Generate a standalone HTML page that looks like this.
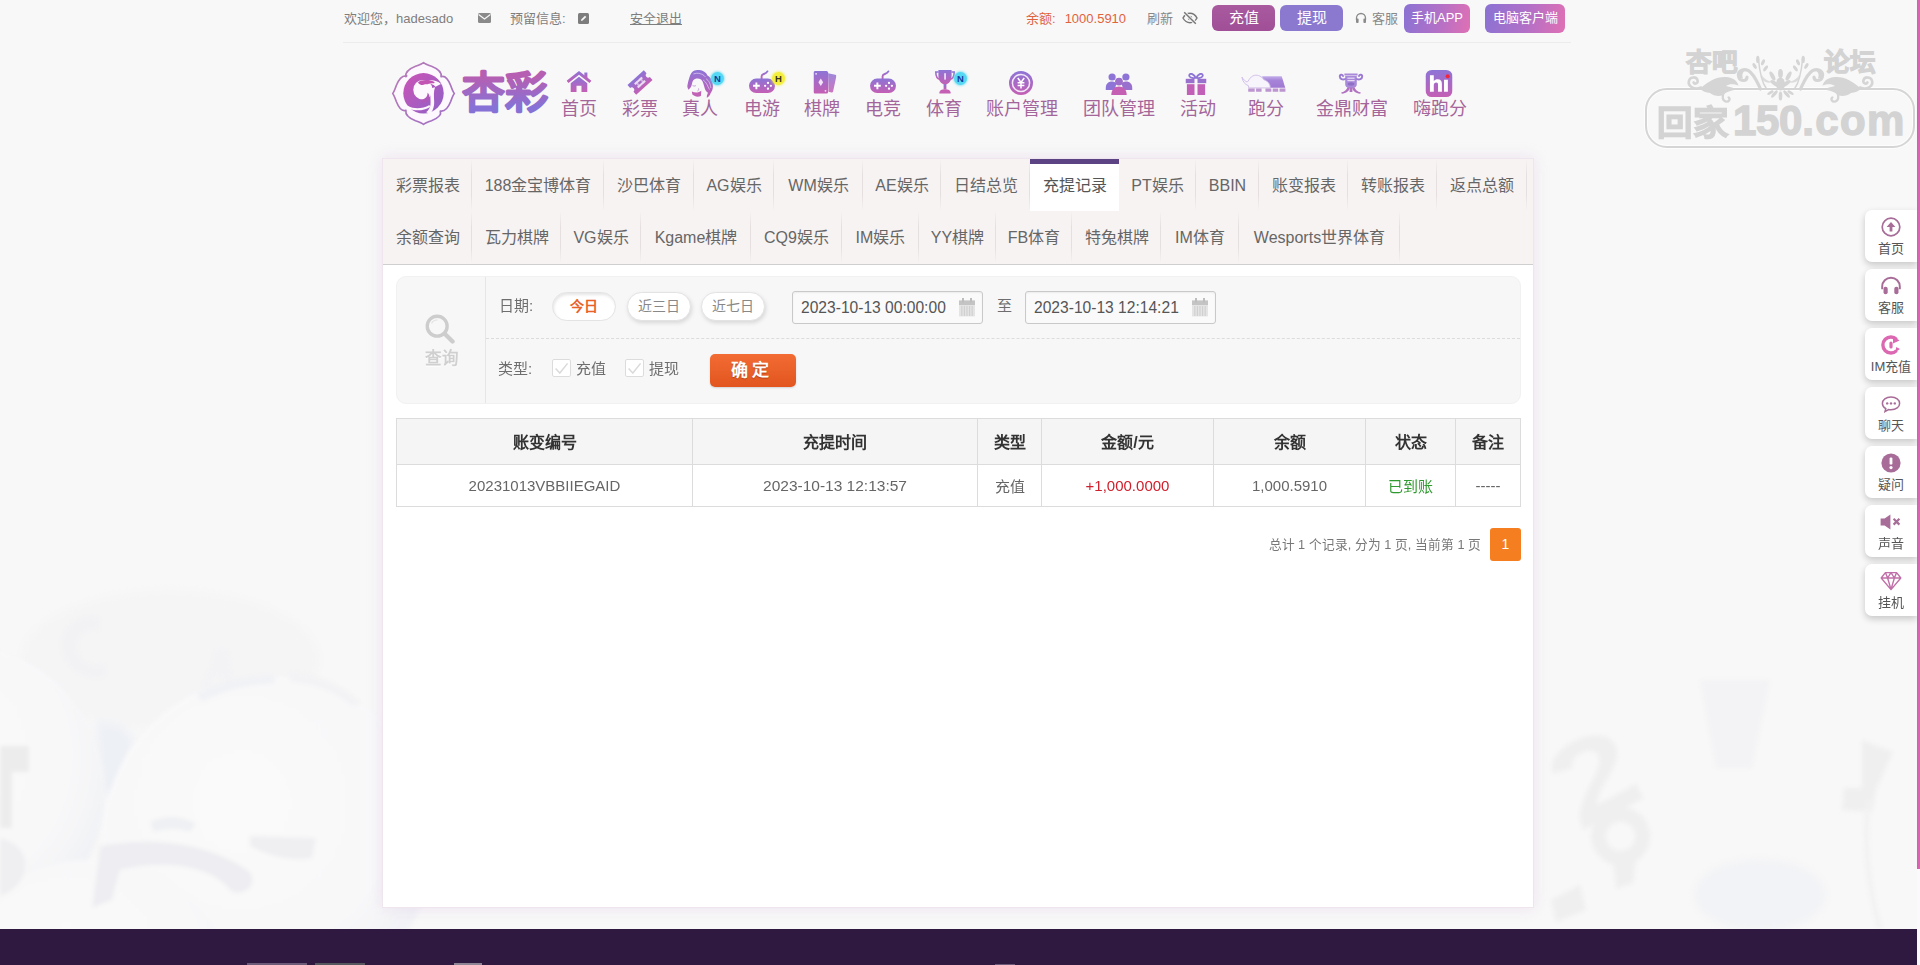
<!DOCTYPE html>
<html lang="zh-CN">
<head>
<meta charset="utf-8">
<title>充提记录</title>
<style>
*{box-sizing:border-box;margin:0;padding:0}
html,body{width:1920px;height:965px;overflow:hidden}
body{position:relative;background:#f8f8f8;font-family:"Liberation Sans",sans-serif;font-size:13px;color:#666}
.abs{position:absolute}
a{color:inherit;text-decoration:none}
/* ---------- top bar ---------- */
#top{position:absolute;left:343px;top:0;width:1228px;height:43px;border-bottom:1px solid #ececec}
#top .t{position:absolute;top:10px;height:18px;line-height:18px;font-size:13px;color:#7e7e7e;white-space:nowrap}
#top .bal{color:#e0633c}
.btn{position:absolute;color:#fff;text-align:center;border-radius:6px;white-space:nowrap}
/* ---------- nav ---------- */
.nv{position:absolute;top:66px;height:56px;transform:translateX(-50%);text-align:center;white-space:nowrap}
.nv svg{position:absolute;left:50%;transform:translateX(-50%)}
.nv span{position:absolute;left:50%;transform:translateX(-50%);top:31px;font-size:18px;line-height:24px;color:#a4669a}
.bdg{position:absolute;width:13px;height:13px;border-radius:50%;font-size:9.5px;line-height:13px;font-weight:bold;text-align:center}
/* ---------- panel ---------- */
#panel{position:absolute;left:382px;top:158px;width:1152px;height:750px;background:#fff;border:1px solid #eee5ee;box-shadow:0 0 14px rgba(214,180,222,.32)}
#tabs{position:absolute;left:0;top:0;width:1150px;height:106px;background:#f7f3f3;border-bottom:1px solid #cfcfcf}
.tb{position:absolute;height:52px;line-height:54px;font-size:16px;color:#666;text-align:center;white-space:nowrap}
.tb:after{content:"";position:absolute;right:0;top:0;width:1px;height:52px;background:linear-gradient(#f7f3f3,#e6dfdf 30%,#e6dfdf 70%,#f7f3f3)}
.tb.on{background:#fff;border-top:5px solid #5c4484;line-height:43px;color:#555}
.tb.on:after{display:none}
/* ---------- search ---------- */
#search{position:absolute;left:13px;top:117px;width:1125px;height:128px;background:#f7f7f7;border:1px solid #f1f1f1;border-radius:10px}
#search .lf{position:absolute;left:0;top:0;width:89px;height:126px;border-right:1px solid #e6e6e6}
#search .dash{position:absolute;left:89px;top:61px;width:1034px;height:0;border-top:1px dashed #dcdcdc}
.lb{position:absolute;font-size:15px;color:#6e6e6e;line-height:20px;white-space:nowrap}
.pill{position:absolute;top:15px;width:64px;height:29px;border-radius:15px;background:#fff;border:1px solid #e3e3e3;font-size:14px;line-height:26px;text-align:center;color:#888;box-shadow:1px 2px 4px rgba(0,0,0,.13)}
.pill.on{color:#e8622a;font-weight:bold;box-shadow:inset 1px 2px 3px rgba(0,0,0,.10)}
.inp{position:absolute;top:14px;width:191px;height:33px;border:1px solid #c9c9c9;border-radius:3px;background:#fafafa;font-size:15.6px;line-height:31px;color:#555;padding-left:8px;white-space:nowrap;box-shadow:inset 0 1px 2px rgba(0,0,0,.06)}
.cb{position:absolute;top:82px;width:19px;height:18px;background:#fff;border:1px solid #dcdcdc;border-radius:2px}
/* ---------- table ---------- */
#tbl{position:absolute;left:13px;top:259px;width:1124px;border-collapse:collapse;table-layout:fixed}
#tbl th,#tbl td{border:1px solid #dcdcdc;text-align:center;white-space:nowrap;padding:0}
#tbl th{height:46px;background:#f5f5f5;font-size:16px;font-weight:bold;color:#333;padding-bottom:2px}
#tbl td{height:42px;font-size:15px;color:#666;padding-bottom:1px}
/* ---------- side ---------- */
.sd{position:absolute;left:1865px;width:52px;height:52px;background:#fff;border-radius:7px 0 0 7px;box-shadow:0 3px 7px rgba(0,0,0,.2)}
.sd span{position:absolute;left:0;width:52px;top:30px;text-align:center;font-size:13px;line-height:18px;color:#555;white-space:nowrap}
.sd svg{position:absolute;left:16px;top:7px}
</style>
</head>
<body>
<svg class="abs" style="left:0;top:0" width="1917" height="929" viewBox="0 0 1917 929">
<defs>
<radialGradient id="ba" cx=".42" cy=".38" r=".62"><stop offset="0" stop-color="#fafafa"/><stop offset=".75" stop-color="#f8f8f9"/><stop offset="1" stop-color="#f1f2f5"/></radialGradient>
<filter id="bl"><feGaussianBlur stdDeviation="2.2"/></filter>
<filter id="bl2"><feGaussianBlur stdDeviation="5"/></filter>
</defs>
<g filter="url(#bl2)">
<path d="M95 700 L135 740 L118 800 L100 790 Z" fill="#edf0f5"/>
<ellipse cx="1760" cy="895" rx="66" ry="36" fill="#f2f3f6"/>
<ellipse cx="170" cy="660" rx="150" ry="70" fill="#f5f5f6"/>
</g>
<g filter="url(#bl)">
<circle cx="-42" cy="792" r="147" fill="url(#ba)"/>
<circle cx="268" cy="842" r="166" fill="url(#ba)"/>
<circle cx="90" cy="1010" r="150" fill="url(#ba)"/>
<path d="M0 746 H29 V772 H12 V828 H0 Z" fill="#ececed"/>
<path d="M0 838 C18 842 30 856 24 874 C20 886 8 894 0 896 Z" fill="#efeff1"/>
<path d="M100 846 C150 836 210 842 250 872 C258 884 246 896 232 892 C214 868 170 858 120 870 L112 900 L92 908 Z" fill="#eeeef2"/>
<path d="M250 836 L316 838 L312 858 C292 862 268 856 250 846 Z" fill="#efeff2"/>
<path d="M150 822 C165 814 185 816 196 824 L190 832 C178 828 166 828 154 832 Z" fill="#eff0f3"/>
<path d="M62 650 C58 630 76 612 100 618 L98 630 C84 628 74 638 78 652 C82 664 94 668 104 664 L106 676 C86 682 66 670 62 650 Z" fill="#f2f2f4"/>
<path d="M202 688 L216 650 L228 650 L234 688 L224 688 L222 676 L212 676 L210 688 Z" fill="#f3f3f5"/>
<path d="M196 694 C220 680 250 674 276 676 L274 684 C250 684 224 690 202 702 Z" fill="#f1f2f5"/>
<path d="M290 672 C320 674 345 686 362 704 L352 706 C336 692 314 684 290 682 Z" fill="#f3f3f5"/>
<g transform="rotate(-28 1606 800)" fill="#efeff0"><path d="M1572 752 C1572 726 1640 726 1640 756 C1640 776 1604 784 1596 800 H1640 V816 H1572 C1572 784 1620 776 1620 756 C1620 744 1592 744 1592 756 Z"/></g>
<g transform="rotate(-20 1622 840)"><circle cx="1622" cy="836" r="22" fill="none" stroke="#efeff0" stroke-width="15"/><path d="M1606 858 L1600 884 L1618 884 L1630 860 Z" fill="#efeff0"/></g>
<path d="M1700 680 H1770 L1752 768 H1716 Z" fill="#f3f3f5"/>
<path d="M1862 740 L1893 752 L1876 790 L1872 812 L1842 810 L1844 788 L1862 788 Z" fill="#efefef"/>
<path d="M1551 900 L1580 885 L1586 910 L1556 922 Z" fill="#efeff0"/>
<path d="M1868 800 C1864 840 1866 880 1880 929" fill="none" stroke="#f2f2f3" stroke-width="5"/>
</g>
</svg>

<div id="top">
<div class="t" style="left:1px">欢迎您，hadesado</div>
<svg class="abs" style="left:135px;top:13px" width="13" height="10" viewBox="0 0 13 10"><rect width="13" height="10" rx="1.5" fill="#8a8a8a"/><path d="M0.6 1.6 L6.5 6 L12.4 1.6" fill="none" stroke="#f8f8f8" stroke-width="1.2"/></svg>
<div class="t" style="left:167px">预留信息:</div>
<svg class="abs" style="left:235px;top:13px" width="11" height="11" viewBox="0 0 11 11"><rect width="11" height="11" rx="1.5" fill="#7d7d7d"/><path d="M3 8 L3.4 6.3 L7 2.7 L8.3 4 L4.7 7.6 Z" fill="#f8f8f8"/></svg>
<div class="t" style="left:287px;text-decoration:underline"><a>安全退出</a></div>
<div class="t bal" style="left:683px">余额:<span style="margin-left:9px">1000.5910</span></div>
<div class="t" style="left:804px;color:#888">刷新</div>
<svg class="abs" style="left:839px;top:11px" width="16" height="14" viewBox="0 0 16 14"><path d="M1 7 C3 3.4 5.5 2.3 8 2.3 C10.5 2.3 13 3.4 15 7 C13 10.6 10.5 11.7 8 11.7 C5.5 11.7 3 10.6 1 7 Z" fill="none" stroke="#777" stroke-width="1.5"/><circle cx="8" cy="7" r="2.2" fill="#777"/><path d="M2 1 L14 13" stroke="#f8f8f8" stroke-width="3.2"/><path d="M2.2 1.2 L13.8 12.8" stroke="#777" stroke-width="1.5"/></svg>
<div class="btn" style="left:869px;top:5px;width:63px;height:26px;line-height:26px;font-size:15px;background:linear-gradient(#a95a9f,#a04f96)">充值</div>
<div class="btn" style="left:937px;top:5px;width:63px;height:26px;line-height:26px;font-size:15px;background:#8b79cf">提现</div>
<svg class="abs" style="left:1012px;top:12px" width="12" height="12" viewBox="0 0 12 12"><path d="M1.5 8 V6 A4.5 4.5 0 0 1 10.5 6 V8" fill="none" stroke="#8a8a8a" stroke-width="1.3"/><rect x="1" y="6.6" width="2.6" height="4.4" rx="1" fill="#8a8a8a"/><rect x="8.4" y="6.6" width="2.6" height="4.4" rx="1" fill="#8a8a8a"/></svg>
<div class="t" style="left:1029px;color:#888">客服</div>
<div class="btn" style="left:1061px;top:4px;width:66px;height:29px;line-height:28px;font-size:13px;background:linear-gradient(100deg,#8e72d2 5%,#b070c8 50%,#e070b4 100%)">手机APP</div>
<div class="btn" style="left:1142px;top:4px;width:80px;height:29px;line-height:28px;font-size:13px;background:linear-gradient(100deg,#8e72d2 5%,#b070c8 50%,#e070b4 100%)">电脑客户端</div>
</div>
<svg width="0" height="0" style="position:absolute"><defs>
<linearGradient id="g1" x1="0" y1="0" x2="0" y2="1"><stop offset="0" stop-color="#8d74d6"/><stop offset="1" stop-color="#c45fb4"/></linearGradient>
<linearGradient id="g2" x1="0" y1="0" x2="1" y2="1"><stop offset="0" stop-color="#cc52b6"/><stop offset="1" stop-color="#8e62c8"/></linearGradient>
<linearGradient id="g3" x1="0" y1="0" x2="1" y2="1"><stop offset="0" stop-color="#b97cb6"/><stop offset="1" stop-color="#a070c6"/></linearGradient>
</defs></svg>
<svg class="abs" style="left:391px;top:61px" width="65" height="65" viewBox="0 0 65 65">
<path d="M14.90 15.70 C13.90 10.30 19.50 7.30 24.50 5.30 C28.50 3.90 31.10 2.90 32.50 1.70 C33.90 2.90 36.50 3.90 40.50 5.30 C45.50 7.30 51.10 10.30 50.10 15.70 C54.70 13.90 57.70 19.50 59.70 24.50 C61.10 28.50 62.10 31.10 63.30 32.50 C62.10 33.90 61.10 36.50 59.70 40.50 C57.70 45.50 54.70 51.10 49.30 50.10 C51.10 54.70 45.50 57.70 40.50 59.70 C36.50 61.10 33.90 62.10 32.50 63.30 C31.10 62.10 28.50 61.10 24.50 59.70 C19.50 57.70 13.90 54.70 14.90 49.30 C10.30 51.10 7.30 45.50 5.30 40.50 C3.90 36.50 2.90 33.90 1.70 32.50 C2.90 31.10 3.90 28.50 5.30 24.50 C7.30 19.50 10.30 13.90 15.70 14.90 Z" fill="#fdf8fd" stroke="url(#g3)" stroke-width="1.7" stroke-linejoin="round"/>
<g transform="translate(32.5 32.3)">
<circle r="20.2" fill="url(#g2)"/>
<ellipse cx="-0.6" cy="-3.6" rx="9.6" ry="9.8" fill="#fdf8fd"/>
<path d="M5 -12.6 C9 -13.6 14 -12.4 17.4 -9.4 L12 -6.6 C10 -8.6 7.4 -9.6 5 -9.4 Z" fill="#fdf8fd"/>
<path d="M7.6 -5 C6 0 7.4 6 7 11 C6.8 14.4 5 17 2.6 19 L6.6 20.6 C10 17 11 12 10.6 7 C10.4 2 10 -2 11.6 -6 Z" fill="#fdf8fd"/>
<path d="M-15.4 12.6 C-9 16 -1 15.4 6 11.6 L6.6 13.6 C-0.4 18 -9.4 18 -16.4 14.4 Z" fill="#fdf8fd"/>
<path d="M-5.6 -10.8 C-2 -13.6 5 -14 10.6 -11.6 C11.6 -11 11 -10 9.8 -10 C6.6 -10.4 4.4 -8.6 1.4 -9 C-0.6 -7.6 -3.4 -8 -5.6 -10.8 Z" fill="#c254b4"/>
<path d="M-2.4 6.6 C1.6 6 4.4 3 4 -0.6 C6.6 1 6.6 5.4 4 8 C1.6 10.4 -1.6 9.6 -2.4 6.6 Z" fill="#b058ba"/>
</g>
</svg>
<svg class="abs" style="left:458px;top:62px" width="100" height="60" viewBox="0 0 100 60"><defs><linearGradient id="g4" gradientUnits="userSpaceOnUse" x1="0" y1="8" x2="0" y2="52"><stop offset=".15" stop-color="#b65fb2"/><stop offset=".85" stop-color="#8672d6"/></linearGradient></defs><text x="4" y="46" font-size="43" font-weight="bold" fill="url(#g4)" stroke="url(#g4)" stroke-width="1.8" stroke-linejoin="round" style="font-family:'Liberation Sans',sans-serif">杏彩</text></svg>
<div class="nv" style="left:579px;width:60px"><svg style="top:5px" width="25" height="21" viewBox="0 0 26 22"><path d="M13 0 L26 10.3 L24 12.6 L13 4 L2 12.6 L0 10.3 Z" fill="url(#g1)"/><path d="M4.3 12.8 L13 6 L21.7 12.8 V22 H15.6 V15.4 H10.4 V22 H4.3 Z" fill="url(#g1)"/><rect x="18.6" y="1.6" width="3.2" height="6" fill="url(#g1)"/></svg><span>首页</span></div>
<div class="nv" style="left:640px;width:60px"><svg style="top:4px" width="26" height="25" viewBox="0 0 26 25"><g transform="rotate(-42 13 12.5)"><path d="M2 6 H24 V10 A2.5 2.5 0 0 0 24 15 V19 H2 V15 A2.5 2.5 0 0 0 2 10 Z" fill="url(#g1)"/><rect x="8" y="9.2" width="10" height="2.1" fill="#e9dcf3"/><rect x="8" y="13.6" width="10" height="2.1" fill="#e9dcf3"/><rect x="9.2" y="9.2" width="2" height="6.5" fill="#e9dcf3" opacity=".6"/><rect x="14.8" y="9.2" width="2" height="6.5" fill="#e9dcf3" opacity=".6"/></g></svg><span>彩票</span></div>
<div class="nv" style="left:700px;width:60px"><svg style="top:4px" width="27" height="28" viewBox="0 0 27 28"><path d="M10.7 0 C15 -0.4 19.5 1.6 21 5.5 C24.6 7.4 26.6 12 26.4 16.9 C26.2 20 24.8 22 24 23.4 C23.6 25 22 27 20.4 27.8 C20 26 21 24.4 21.4 22.8 C19.6 21.6 18.4 19.6 18 17.6 C17 14.6 16.8 11.6 14.6 9.6 C12 8 8.6 8.4 6.6 10.4 C5.4 12.4 5.6 14.6 4.6 16.6 C4 18 3 19 2.1 19.8 C1 18 0.6 16.6 0.95 15.2 C1.6 12 2.4 9 3.2 6.6 C4.4 2.6 7 0.2 10.7 0 Z" fill="url(#g1)"/><path d="M5.4 21.4 C8 23 12 23 14.8 20.8 L14.4 26 C11 27.4 8 26.4 5.8 24.6 Z" fill="#c262b4"/><path d="M7 4 C11 2.4 16 3.4 19 7 M16.6 10 C20 12 21 16 23 19.6 M19.4 8.6 C22.6 10.6 24 14 24.4 18" fill="none" stroke="#efe4f7" stroke-width=".8" opacity=".75"/><path d="M6 15.4 C7 16.2 8.4 16.2 9.4 15.6 M12 18.4 C12.6 19.6 12 20.6 11 21" fill="none" stroke="#b58cc8" stroke-width=".8"/></svg><i class="bdg" style="left:41px;top:5.5px;background:#55d8f3;box-shadow:0 0 2px 1px rgba(85,216,243,.55);color:#173a9c;font-style:normal">N</i><span>真人</span></div>
<div class="nv" style="left:762px;width:60px"><svg style="top:4px" width="26" height="23" viewBox="0 0 26 23"><path d="M12.6 9 V6.2 C12.6 3.4 16.6 4.8 18.4 1.4" fill="none" stroke="url(#g1)" stroke-width="1.9" stroke-linecap="round"/><rect x="0" y="8.6" width="26" height="14.4" rx="7.2" fill="url(#g1)"/><path d="M7.4 12.4 V19.2 M4 15.8 H10.8" stroke="#fff" stroke-width="1.9"/><circle cx="19" cy="12.9" r="1.15" fill="#fff"/><circle cx="19" cy="18.7" r="1.15" fill="#fff"/><circle cx="16.1" cy="15.8" r="1.15" fill="#fff"/><circle cx="21.9" cy="15.8" r="1.15" fill="#fff"/></svg><i class="bdg" style="left:40px;top:5.5px;background:#f4ee3c;box-shadow:0 0 2px 1px rgba(244,238,60,.55);color:#3a3520;font-style:normal">H</i><span>电游</span></div>
<div class="nv" style="left:822px;width:60px"><svg style="top:5px;margin-left:3px" width="23" height="23" viewBox="0 0 23 23"><path d="M14.6 2.2 L21.8 3.8 C22.6 4 23 4.6 22.8 5.4 L19.6 20.4 C19.4 21.2 18.8 21.6 18 21.4 L15 20.8 Z" fill="url(#g1)" opacity=".85"/><rect x="0" y="0" width="14.6" height="22.6" rx="1.6" fill="url(#g1)"/><path d="M7.3 7.6 L9.7 11.3 L7.3 15 L4.9 11.3 Z" fill="#f1e4f6"/><circle cx="2.6" cy="2.8" r=".9" fill="#f1e4f6"/><circle cx="12" cy="19.8" r=".9" fill="#f1e4f6"/></svg><span>棋牌</span></div>
<div class="nv" style="left:883px;width:60px"><svg style="top:4px" width="26" height="23" viewBox="0 0 26 23"><path d="M12.6 9 V6.2 C12.6 3.4 16.6 4.8 18.4 1.4" fill="none" stroke="url(#g1)" stroke-width="1.9" stroke-linecap="round"/><rect x="0" y="8.6" width="26" height="14.4" rx="7.2" fill="url(#g1)"/><path d="M7.4 12.4 V19.2 M4 15.8 H10.8" stroke="#fff" stroke-width="1.9"/><circle cx="19" cy="12.9" r="1.15" fill="#fff"/><circle cx="19" cy="18.7" r="1.15" fill="#fff"/><circle cx="16.1" cy="15.8" r="1.15" fill="#fff"/><circle cx="21.9" cy="15.8" r="1.15" fill="#fff"/></svg><span>电竞</span></div>
<div class="nv" style="left:944px;width:60px"><svg style="top:4px;margin-left:1px" width="20" height="24" viewBox="0 0 20 24"><path d="M3.4 0 H16.6 V5.6 C16.6 11 13.6 14.4 10 14.4 C6.4 14.4 3.4 11 3.4 5.6 Z" fill="url(#g1)"/><path d="M3.6 2 H0.8 C0.8 6.4 2.2 8.8 5 9.6 M16.4 2 H19.2 C19.2 6.4 17.8 8.8 15 9.6" fill="none" stroke="url(#g1)" stroke-width="1.6"/><rect x="8.6" y="14" width="2.8" height="5.4" fill="url(#g1)"/><path d="M4.4 22.6 C4.4 20.4 6.6 19.2 10 19.2 C13.4 19.2 15.6 20.4 15.6 22.6 V23.6 H4.4 Z" fill="#c45fb4"/><rect x="9.2" y="3.2" width="1.7" height="6.4" fill="#efe2f6"/></svg><i class="bdg" style="left:40px;top:5.5px;background:#55d8f3;box-shadow:0 0 2px 1px rgba(85,216,243,.55);color:#173a9c;font-style:normal">N</i><span>体育</span></div>
<div class="nv" style="left:1022px;width:96px"><svg style="top:5px;margin-left:-1px" width="24" height="24" viewBox="0 0 24 24"><circle cx="12" cy="12" r="12" fill="url(#g1)"/><circle cx="12" cy="12" r="8.6" fill="none" stroke="#f3e9f8" stroke-width="1.5"/><path d="M8.8 7 L12 11.4 L15.2 7 M8.6 11.8 H15.4 M8.6 14.4 H15.4 M12 11.4 V17.6" fill="none" stroke="#fff" stroke-width="1.5"/></svg><span>账户管理</span></div>
<div class="nv" style="left:1119px;width:96px"><svg style="top:7px" width="27" height="22" viewBox="0 0 27 22"><circle cx="6.6" cy="4" r="3.6" fill="#8d74d6"/><circle cx="20.4" cy="4" r="3.6" fill="#8d74d6"/><path d="M0 16 C0 11 2.6 8.4 6.6 8.4 C9 8.4 10.4 9.4 11 10.6 L9 17 H0 Z" fill="#8d74d6"/><path d="M27 16 C27 11 24.4 8.4 20.4 8.4 C18 8.4 16.6 9.4 16 10.6 L18 17 H27 Z" fill="#9a70cf"/><circle cx="13.5" cy="8.6" r="3.9" fill="#9e6ecb"/><path d="M5.8 22 C5.8 16.6 8.8 13.4 13.5 13.4 C18.2 13.4 21.2 16.6 21.2 22 Z" fill="#c45fb4"/></svg><span>团队管理</span></div>
<div class="nv" style="left:1198px;width:60px"><svg style="top:7px;margin-left:-2px" width="21" height="22" viewBox="0 0 21 22"><path d="M10.5 5.4 C8.6 1 4.6 -0.6 3.8 2 C3.2 4.2 6.6 5.4 10.5 5.4 C14.4 5.4 17.8 4.2 17.2 2 C16.4 -0.6 12.4 1 10.5 5.4 Z" fill="none" stroke="#8d74d6" stroke-width="1.8"/><rect x="0" y="5.8" width="21" height="4.4" fill="#9a70cf"/><rect x="1.4" y="11.2" width="18.2" height="10.8" fill="#c160b6"/><rect x="9" y="5.8" width="3" height="16.2" fill="#f8f8f8"/></svg><span>活动</span></div>
<div class="nv" style="left:1266px;width:60px"><svg style="top:8px;margin-left:-2px" width="46" height="19" viewBox="0 0 47 19"><defs><linearGradient id="g5" x1="0" y1="0" x2="0" y2="1"><stop offset="0" stop-color="#c2adea"/><stop offset=".35" stop-color="#a684d8"/><stop offset="1" stop-color="#a078d2"/></linearGradient></defs><path d="M21.7 2.2 H41.6 L45.2 13.9 H21.7 Z" fill="url(#g5)"/><path d="M1 3 C1.6 7.6 4.2 10.6 7.4 11.6 L8 14 H29.8 C30.2 9.6 27 7 23.4 5.6 C21.4 2.4 17.6 0.4 13.8 1.2 C11.4 1.6 9.6 3.4 8.2 5.6 C7.6 6.6 7 7.6 6.4 8 C4.4 7.4 2.4 5.4 1 3 Z" fill="#f8f4fc" stroke="#cdb9e9" stroke-width=".9"/><path d="M7.4 14.6 H14 V18 H7.4 Z M15.4 14.6 H21 V18 H15.4 Z M25 14.6 H31 V18 H25 Z M32.4 14.6 H38 V18 H32.4 Z M39.4 14.6 H45.4 V18 H39.4 Z" fill="#b689cc" opacity=".9"/></svg><span>跑分</span></div>
<div class="nv" style="left:1352px;width:96px"><svg style="top:7px;margin-left:-1px" width="26" height="21" viewBox="0 0 26 21"><path d="M6.4 0.6 H19.6 V2.4 H6.4 Z M7.2 3 H18.8 V11.4 C18.8 13.8 16.4 15 13 15 C9.6 15 7.2 13.8 7.2 11.4 Z" fill="#a98ada"/><path d="M7.2 6 C4.6 7.4 2 6 1.8 3.6 C1.6 1.4 4.8 1 5 3 M18.8 6 C21.4 7.4 24 6 24.2 3.6 C24.4 1.4 21.2 1 21 3" fill="none" stroke="#9a7ad2" stroke-width="1.9" stroke-linecap="round"/><rect x="9.4" y="4.6" width="7.2" height="1.2" fill="#e6daf5"/><rect x="9.4" y="7" width="7.2" height="1.2" fill="#e6daf5"/><ellipse cx="13" cy="11" rx="3.4" ry="1.7" fill="#8f6fc6"/><path d="M9.4 14.2 C8.8 16.8 6.6 18.6 3.2 19.4 L3.8 20.8 C8.4 20.2 11.2 18.2 11.8 14.8 Z M16.6 14.2 C17.2 16.8 19.4 18.6 22.8 19.4 L22.2 20.8 C17.6 20.2 14.8 18.2 14.2 14.8 Z" fill="#b272c2"/><rect x="11.6" y="14.6" width="2.8" height="4.4" fill="#b272c2"/></svg><span>金鼎财富</span></div>
<div class="nv" style="left:1440px;width:78px"><svg style="top:4px;margin-left:-1px" width="27" height="27" viewBox="0 0 28 28"><rect width="28" height="28" rx="6.5" fill="url(#g1)"/><path d="M4.6 5.4 H8.6 V11.4 C9.6 10.2 11 9.6 12.6 9.6 C15.6 9.6 17 11.4 17 14.2 V22.6 H13 V15 C13 13.6 12.4 12.9 11.1 12.9 C9.7 12.9 8.6 13.8 8.6 15.6 V22.6 H4.6 Z M19.2 10 H23.2 V22.6 H19.2 Z" fill="#fff"/><circle cx="23" cy="6.6" r="2.1" fill="#f0283c"/></svg><span>嗨跑分</span></div>

<div class="abs" style="left:1645px;top:88px;width:270px;height:60px;border:2.5px solid #d5d5d5;border-radius:22px;box-shadow:0 0 0 1px rgba(255,255,255,.7),inset 0 0 0 1px rgba(255,255,255,.7)"></div>
<div class="abs" style="left:1686px;top:44.5px;width:60px;height:34px;line-height:34px;font-size:25.5px;font-weight:bold;color:#d3d3d3;white-space:nowrap;-webkit-text-stroke:1.2px #d3d3d3">杏吧</div>
<div class="abs" style="left:1824px;top:44.5px;width:60px;height:34px;line-height:34px;font-size:25.5px;font-weight:bold;color:#d3d3d3;white-space:nowrap;-webkit-text-stroke:1.2px #d3d3d3">论坛</div>
<svg class="abs" style="left:1686px;top:54px" width="190" height="50" viewBox="0 0 190 50"><g id="wmh">
<path d="M15 33.5 C7 36.5 1.6 31.5 3 26.6 C4.4 22.4 10.6 22.4 11.6 26.4 C12.3 29.4 8.6 30.8 7.6 28.4" fill="none" stroke="#d5d5d5" stroke-width="2.6" stroke-linecap="round"/>
<path d="M14 35 C22 27 31 22.4 40 23 C46 23.4 51 26 52.6 31.6 C47 29.4 43 30 40 32 C44 33 48 34 52.6 35.4 C45 36 40 38 36 41.6 C32 42.6 27 41.6 24 39 C20 38.6 16.6 37.4 14 35 Z" fill="#d5d5d5"/>
<path d="M38 38 C36 42 36 46.4 40 47.6 C43 48.2 44.6 45 42.6 43.4" fill="none" stroke="#d5d5d5" stroke-width="2.3" stroke-linecap="round"/>
<path d="M74.5 35 C71 28 68.5 20.5 62.5 16.6 C56 13.6 51 18 52.8 23.2 C54.4 27.6 61 27.6 61 23" fill="none" stroke="#d5d5d5" stroke-width="3.2" stroke-linecap="round"/>
<path d="M53 24 C51 19 55 14.6 61 16 C57 17 55.4 20.4 57 24.6 Z" fill="#d5d5d5"/>
<path d="M80 34 C75 27 73.6 17 72.4 5" fill="none" stroke="#d5d5d5" stroke-width="1.5" stroke-linecap="round"/>
<ellipse cx="71.8" cy="5.4" rx="1.7" ry="3.6" fill="#d5d5d5"/>
<ellipse cx="77" cy="8.4" rx="1.6" ry="3.2" transform="rotate(25 77 8.4)" fill="#d5d5d5"/>
<ellipse cx="68.6" cy="12" rx="1.6" ry="3.2" transform="rotate(-30 68.6 12)" fill="#d5d5d5"/>
<ellipse cx="79.6" cy="14.4" rx="1.6" ry="3.4" transform="rotate(35 79.6 14.4)" fill="#d5d5d5"/>
<path d="M76 21 C78 25 82 27.6 87 27.6 C84 29.6 79 28.6 76.4 25.4 Z" fill="#d5d5d5" opacity=".8"/>
<ellipse cx="86.4" cy="22" rx="2" ry="5" transform="rotate(-28 86.4 22)" fill="#d5d5d5"/>
<ellipse cx="89" cy="29.6" rx="2.1" ry="5.4" transform="rotate(-55 89 29.6)" fill="#d5d5d5"/>
<ellipse cx="88.4" cy="40" rx="1.7" ry="4.6" transform="rotate(40 88.4 40)" fill="#d5d5d5"/>
<ellipse cx="84.4" cy="38.6" rx="1.4" ry="3.6" transform="rotate(58 84.4 38.6)" fill="#d5d5d5"/>
</g><use href="#wmh" transform="translate(189 0) scale(-1 1)"/>
<ellipse cx="94.5" cy="19.6" rx="2.4" ry="4.6" fill="#d5d5d5"/><ellipse cx="94.5" cy="30" rx="4.4" ry="6.6" fill="#d5d5d5"/><ellipse cx="94.5" cy="42" rx="1.8" ry="4.6" fill="#d5d5d5"/>
</svg>
<div class="abs" style="left:1657px;top:97px;width:256px;height:48px;line-height:48px;font-size:42px;font-weight:bold;color:#d3d3d3;white-space:nowrap;letter-spacing:-0.3px;-webkit-text-stroke:1.4px #d3d3d3"><span style="font-size:35.5px;letter-spacing:0.4px;display:inline-block;transform:scaleY(.95);transform-origin:50% 78%">回家</span><span style="margin-left:3.2px">150</span><span style="letter-spacing:1.4px">.com</span></div>

<div id="panel">
<div id="tabs">
<div class="tb" style="left:0px;top:0px;width:89px"><a>彩票报表</a></div>
<div class="tb" style="left:89px;top:0px;width:132px"><a>188金宝博体育</a></div>
<div class="tb" style="left:221px;top:0px;width:90px"><a>沙巴体育</a></div>
<div class="tb" style="left:311px;top:0px;width:80px"><a>AG娱乐</a></div>
<div class="tb" style="left:391px;top:0px;width:89px"><a>WM娱乐</a></div>
<div class="tb" style="left:480px;top:0px;width:78px"><a>AE娱乐</a></div>
<div class="tb" style="left:558px;top:0px;width:89px"><a>日结总览</a></div>
<div class="tb on" style="left:647px;top:0px;width:89px"><a>充提记录</a></div>
<div class="tb" style="left:736px;top:0px;width:77px"><a>PT娱乐</a></div>
<div class="tb" style="left:813px;top:0px;width:63px"><a>BBIN</a></div>
<div class="tb" style="left:876px;top:0px;width:89px"><a>账变报表</a></div>
<div class="tb" style="left:965px;top:0px;width:89px"><a>转账报表</a></div>
<div class="tb" style="left:1054px;top:0px;width:90px"><a>返点总额</a></div>
<div class="tb" style="left:0px;top:52px;width:89px"><a>余额查询</a></div>
<div class="tb" style="left:89px;top:52px;width:89px"><a>瓦力棋牌</a></div>
<div class="tb" style="left:178px;top:52px;width:80px"><a>VG娱乐</a></div>
<div class="tb" style="left:258px;top:52px;width:110px"><a>Kgame棋牌</a></div>
<div class="tb" style="left:368px;top:52px;width:91px"><a>CQ9娱乐</a></div>
<div class="tb" style="left:459px;top:52px;width:77px"><a>IM娱乐</a></div>
<div class="tb" style="left:536px;top:52px;width:77px"><a>YY棋牌</a></div>
<div class="tb" style="left:613px;top:52px;width:76px"><a>FB体育</a></div>
<div class="tb" style="left:689px;top:52px;width:89px"><a>特兔棋牌</a></div>
<div class="tb" style="left:778px;top:52px;width:78px"><a>IM体育</a></div>
<div class="tb" style="left:856px;top:52px;width:161px"><a>Wesports世界体育</a></div>
</div>
<div id="search">
<div class="lf">
<svg class="abs" style="left:28px;top:37px" width="30" height="30" viewBox="0 0 32 32"><circle cx="13" cy="13" r="10.6" fill="none" stroke="#cdcdcd" stroke-width="3.6"/><path d="M21 21 L29.4 29.4" stroke="#cdcdcd" stroke-width="4.6" stroke-linecap="round"/><path d="M7 10 C8.4 7.4 11 6.2 13.4 6.4" fill="none" stroke="#e2e2e2" stroke-width="1.2"/></svg>
<div class="abs" style="left:0;top:70px;width:89px;text-align:center;font-size:16.5px;line-height:22px;font-weight:bold;color:#d0d0d0;text-shadow:0 1px 0 #fff">查询</div>
</div>
<div class="dash"></div>
<div class="lb" style="left:102px;top:19px">日期:</div>
<div class="pill on" style="left:155px">今日</div>
<div class="pill" style="left:230px">近三日</div>
<div class="pill" style="left:304px">近七日</div>
<div class="inp" style="left:395px">2023-10-13 00:00:00<svg class="abs" style="left:166px;top:6px" width="16" height="19" viewBox="0 0 16 19"><rect x="0" y="2.4" width="16" height="5" fill="#c4c4c4"/><rect x="0" y="7.4" width="16" height="11" fill="#e4e4e4"/><path d="M2.8 8 V18 M5.4 8 V18 M8 8 V18 M10.6 8 V18 M13.2 8 V18" stroke="#cfcfcf" stroke-width="1.1"/><rect x="3" y="0" width="2" height="4.4" fill="#bdbdbd"/><rect x="11" y="0" width="2" height="4.4" fill="#bdbdbd"/></svg></div>
<div class="lb" style="left:600px;top:19px">至</div>
<div class="inp" style="left:628px">2023-10-13 12:14:21<svg class="abs" style="left:166px;top:6px" width="16" height="19" viewBox="0 0 16 19"><rect x="0" y="2.4" width="16" height="5" fill="#c4c4c4"/><rect x="0" y="7.4" width="16" height="11" fill="#e4e4e4"/><path d="M2.8 8 V18 M5.4 8 V18 M8 8 V18 M10.6 8 V18 M13.2 8 V18" stroke="#cfcfcf" stroke-width="1.1"/><rect x="3" y="0" width="2" height="4.4" fill="#bdbdbd"/><rect x="11" y="0" width="2" height="4.4" fill="#bdbdbd"/></svg></div>
<div class="lb" style="left:101px;top:82px">类型:</div>
<div class="cb" style="left:155px"><svg class="abs" style="left:1px;top:1px" width="15" height="15" viewBox="0 0 15 15"><path d="M1.6 7.6 L5.8 12 L13.6 2.4" fill="none" stroke="#dadada" stroke-width="1.5"/></svg></div>
<div class="lb" style="left:179px;top:82px">充值</div>
<div class="cb" style="left:228px"><svg class="abs" style="left:1px;top:1px" width="15" height="15" viewBox="0 0 15 15"><path d="M1.6 7.6 L5.8 12 L13.6 2.4" fill="none" stroke="#dadada" stroke-width="1.5"/></svg></div>
<div class="lb" style="left:252px;top:82px">提现</div>
<div class="abs" style="left:313px;top:77px;width:86px;height:33px;padding-right:6px;border-radius:5px;background:linear-gradient(#f26c33,#e2551f);color:#fff;font-size:17px;font-weight:bold;line-height:33px;text-align:center;text-shadow:0 1px 1px rgba(120,40,0,.5);box-shadow:0 1px 2px rgba(0,0,0,.15)">确 定</div>
</div>
<table id="tbl"><colgroup><col style="width:296px"><col style="width:285px"><col style="width:64px"><col style="width:172px"><col style="width:152px"><col style="width:90px"><col style="width:65px"></colgroup>
<tr><th>账变编号</th><th>充提时间</th><th>类型</th><th>金额/元</th><th>余额</th><th>状态</th><th>备注</th></tr>
<tr><td>20231013VBBIIEGAID</td><td><span style="font-size:15.5px;line-height:17px;display:inline-block;vertical-align:-1px">2023-10-13 12:13:57</span></td><td>充值</td><td style="color:#d0202c">+1,000.0000</td><td>1,000.5910</td><td style="color:#2f9a2f">已到账</td><td>-----</td></tr>
</table>
<div class="abs" style="left:700px;top:376.5px;width:398px;text-align:right;font-size:12.7px;line-height:18px;color:#777;white-space:nowrap">总计 1 个记录, 分为 1 页, 当前第 1 页</div>
<div class="abs" style="left:1107px;top:369px;width:31px;height:33px;border-radius:3px;background:#f57f20;color:#fff;font-size:14px;line-height:33px;text-align:center">1</div>
</div>

<div class="abs" style="left:1917px;top:0;width:3px;height:965px;background:#fbf9fb"></div>
<div class="sd" style="top:210px"><svg style="left:16px" width="20" height="20" viewBox="0 0 20 20"><circle cx="10" cy="10" r="8.8" fill="none" stroke="#a86c98" stroke-width="1.7"/><path d="M10 5 L14.4 10 H11.4 V14.6 H8.6 V10 H5.6 Z" fill="#a86c98"/></svg><span>首页</span></div>
<div class="sd" style="top:269px"><svg style="left:15px;top:6px" width="22" height="22" viewBox="0 0 20 20"><path d="M2 13 V10.4 A8 8 0 0 1 18 10.4 V13" fill="none" stroke="#a86c98" stroke-width="1.8"/><rect x="3.2" y="10.6" width="3.8" height="6.8" rx="1.8" fill="#a86c98"/><rect x="13" y="10.6" width="3.8" height="6.8" rx="1.8" fill="#a86c98"/></svg><span>客服</span></div>
<div class="sd" style="top:328px"><svg style="left:16px" width="20" height="20" viewBox="0 0 20 20"><path d="M15.6 4.4 A8 8 0 1 0 15.6 15.6" fill="none" stroke="#dc68b2" stroke-width="3.4"/><path d="M12 1.2 L18.6 5.4 L12 8.4 Z" fill="#dc68b2"/><rect x="8.4" y="6.4" width="3.2" height="7.2" rx="1.6" fill="#dc68b2"/><path d="M15.2 12 L19 14 L14.6 17 Z" fill="#dc68b2"/></svg><span>IM充值</span></div>
<div class="sd" style="top:387px"><svg style="left:16px" width="20" height="20" viewBox="0 0 20 20"><path d="M10 3 C5 3 1.4 5.8 1.4 9.4 C1.4 11.6 2.8 13.4 4.8 14.6 L4 17.6 L7.6 15.6 C8.4 15.8 9.2 15.8 10 15.8 C15 15.8 18.6 13 18.6 9.4 C18.6 5.8 15 3 10 3 Z" fill="none" stroke="#a86c98" stroke-width="1.5"/><circle cx="6.2" cy="9.4" r="1.2" fill="#a86c98"/><circle cx="10" cy="9.4" r="1.2" fill="#a86c98"/><circle cx="13.8" cy="9.4" r="1.2" fill="#a86c98"/></svg><span>聊天</span></div>
<div class="sd" style="top:446px"><svg style="left:16px" width="20" height="20" viewBox="0 0 20 20"><circle cx="10" cy="10" r="9.6" fill="#a86c98"/><rect x="8.6" y="4.4" width="2.8" height="7.2" rx="1.2" fill="#fff"/><circle cx="10" cy="14.6" r="1.6" fill="#fff"/></svg><span>疑问</span></div>
<div class="sd" style="top:505px"><svg style="left:15px" width="22" height="20" viewBox="0 0 22 20"><path d="M0.6 6.6 H4.6 L10.4 2.4 V17.6 L4.6 13.4 H0.6 Z" fill="#a86c98"/><path d="M13.6 6.8 L19.4 12.6 M19.4 6.8 L13.6 12.6" stroke="#a86c98" stroke-width="2.2"/></svg><span>声音</span></div>
<div class="sd" style="top:564px"><svg style="left:15px" width="22" height="20" viewBox="0 0 22 20"><path d="M5.4 1.6 H16.6 L20.8 7 L11 18.6 L1.2 7 Z M1.2 7 H20.8 M7.6 7 L11 18.4 L14.4 7 M5.4 1.6 L7.6 7 L11 1.6 L14.4 7 L16.6 1.6" fill="none" stroke="#c070a8" stroke-width="1.4" stroke-linejoin="round"/></svg><span>挂机</span></div>

<div class="abs" style="left:0;top:929px;width:1917px;height:36px;background:#2f1941"></div>
<div class="abs" style="left:247px;top:963px;width:60px;height:2px;background:#6b5a78"></div>
<div class="abs" style="left:315px;top:963px;width:50px;height:2px;background:#56585f"></div>
<div class="abs" style="left:454px;top:963px;width:28px;height:2px;background:#8d8496"></div>
<div class="abs" style="left:995px;top:964px;width:20px;height:1px;background:#6b5a78"></div>
<div class="abs" style="left:1917px;top:0;width:3px;height:869px;background:linear-gradient(90deg,#bf6aa4,#db64b2 40%)"></div>

</body>
</html>
